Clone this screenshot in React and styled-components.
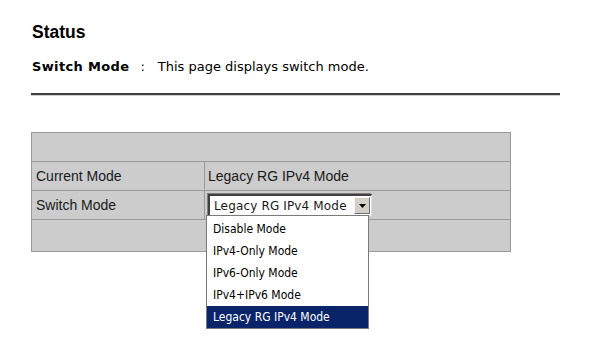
import React from "react";
import styled, { createGlobalStyle } from "styled-components";

const Global = createGlobalStyle`
  html, body { margin: 0; padding: 0; background: #fff; }
  body { font-family: "Liberation Sans", Arial, sans-serif; color: #000; }
`;

const Page = styled.div`
  padding: 22px 0 0 31px;
  width: 530px;
  min-height: 360px;
  box-sizing: border-box;
  position: relative;
`;

const Title = styled.h1`
  margin: 0;
  font-family: "Liberation Sans", Arial, sans-serif;
  font-weight: bold;
  font-size: 17.5px;
  line-height: 20px;
  padding-left: 1px;
`;

const Desc = styled.p`
  margin: 16px 0 0 1px;
  font-family: "DejaVu Sans", Verdana, sans-serif;
  font-size: 13px;
  line-height: 18px;
  display: flex;
  align-items: baseline;
`;

const DescLabel = styled.b`
  font-weight: bold;
  letter-spacing: 0.35px;
`;

const Colon = styled.span`
  margin: 0 13px 0 11px;
`;

const Rule = styled.hr`
  margin: 17px 0 0 0;
  width: 529px;
  height: 0;
  border: none;
  border-top: 2px solid #404040;
  border-bottom: 1px solid #d0d0d0;
`;

const Table = styled.table`
  margin-top: 36px;
  width: 480px;
  border-collapse: collapse;
  background: #cccccc;
  font-family: "Liberation Sans", Arial, sans-serif;
  font-size: 14px;
`;

const Cell = styled.td`
  border: 1px solid #9a9a9a;
  height: ${(p) => p.$h || 28}px;
  padding: 0 0 0 ${(p) => p.$pl ?? 4}px;
  vertical-align: middle;
  width: ${(p) => p.$w || "auto"};
  color: #1a1a1a;
`;

const Select = styled.div`
  width: 157px;
  height: 19px;
  display: flex;
  align-items: center;
  justify-content: space-between;
  background: #fff;
  border-top: 2px solid #404040;
  border-left: 2px solid #404040;
  border-right: 1px solid #e0e0e0;
  border-bottom: 1px solid #e0e0e0;
  box-shadow: -1px -1px 0 #808080;
  margin-left: 3px;
  font-family: "DejaVu Sans", Verdana, sans-serif;
  font-size: 12px;
  padding-left: 4px;
  box-sizing: content-box;
`;

const SelectText = styled.span`
  white-space: nowrap;
  letter-spacing: 0.15px;
`;

const ArrowButton = styled.span`
  width: 14px;
  height: 15px;
  margin-right: 1px;
  background: #d4d0c8;
  border-top: 1px solid #f4f4f4;
  border-left: 1px solid #f4f4f4;
  border-right: 1px solid #707070;
  border-bottom: 1px solid #707070;
  display: flex;
  align-items: center;
  justify-content: center;
`;

const List = styled.ul`
  position: absolute;
  left: 206px;
  top: 215px;
  width: 161px;
  margin: 0;
  padding: 2px 0 0 0;
  list-style: none;
  background: #fff;
  border: 1px solid #7a7a7a;
  font-family: "DejaVu Sans Condensed", "DejaVu Sans", sans-serif;
  font-size: 12px;
  z-index: 2;
`;

const Item = styled.li`
  height: 22px;
  line-height: 22px;
  padding-left: 6px;
  background: ${(p) => (p.$active ? "#0a246a" : "#fff")};
  color: ${(p) => (p.$active ? "#fff" : "#000")};
  white-space: nowrap;
`;

const options = [
  "Disable Mode",
  "IPv4-Only Mode",
  "IPv6-Only Mode",
  "IPv4+IPv6 Mode",
  "Legacy RG IPv4 Mode",
];

export default function App() {
  return (
    <>
      <Global />
      <Page>
        <Title>Status</Title>
        <Desc>
          <DescLabel>Switch Mode</DescLabel>
          <Colon>:</Colon>
          <span>This page displays switch mode.</span>
        </Desc>
        <Rule />
        <Table>
          <tbody>
            <tr>
              <Cell colSpan={2} />
            </tr>
            <tr>
              <Cell $w="168px">Current Mode</Cell>
              <Cell $pl={3}>Legacy RG IPv4 Mode</Cell>
            </tr>
            <tr>
              <Cell>Switch Mode</Cell>
              <Cell $pl={0}>
                <Select>
                  <SelectText>Legacy RG IPv4 Mode</SelectText>
                  <ArrowButton>
                    <svg width="7" height="4" viewBox="0 0 7 4">
                      <path d="M0 0H7L3.5 4Z" fill="#000" />
                    </svg>
                  </ArrowButton>
                </Select>
              </Cell>
            </tr>
            <tr>
              <Cell colSpan={2} $h={31} />
            </tr>
          </tbody>
        </Table>
        <List>
          {options.map((o) => (
            <Item key={o} $active={o === "Legacy RG IPv4 Mode"}>
              {o}
            </Item>
          ))}
        </List>
      </Page>
    </>
  );
}
